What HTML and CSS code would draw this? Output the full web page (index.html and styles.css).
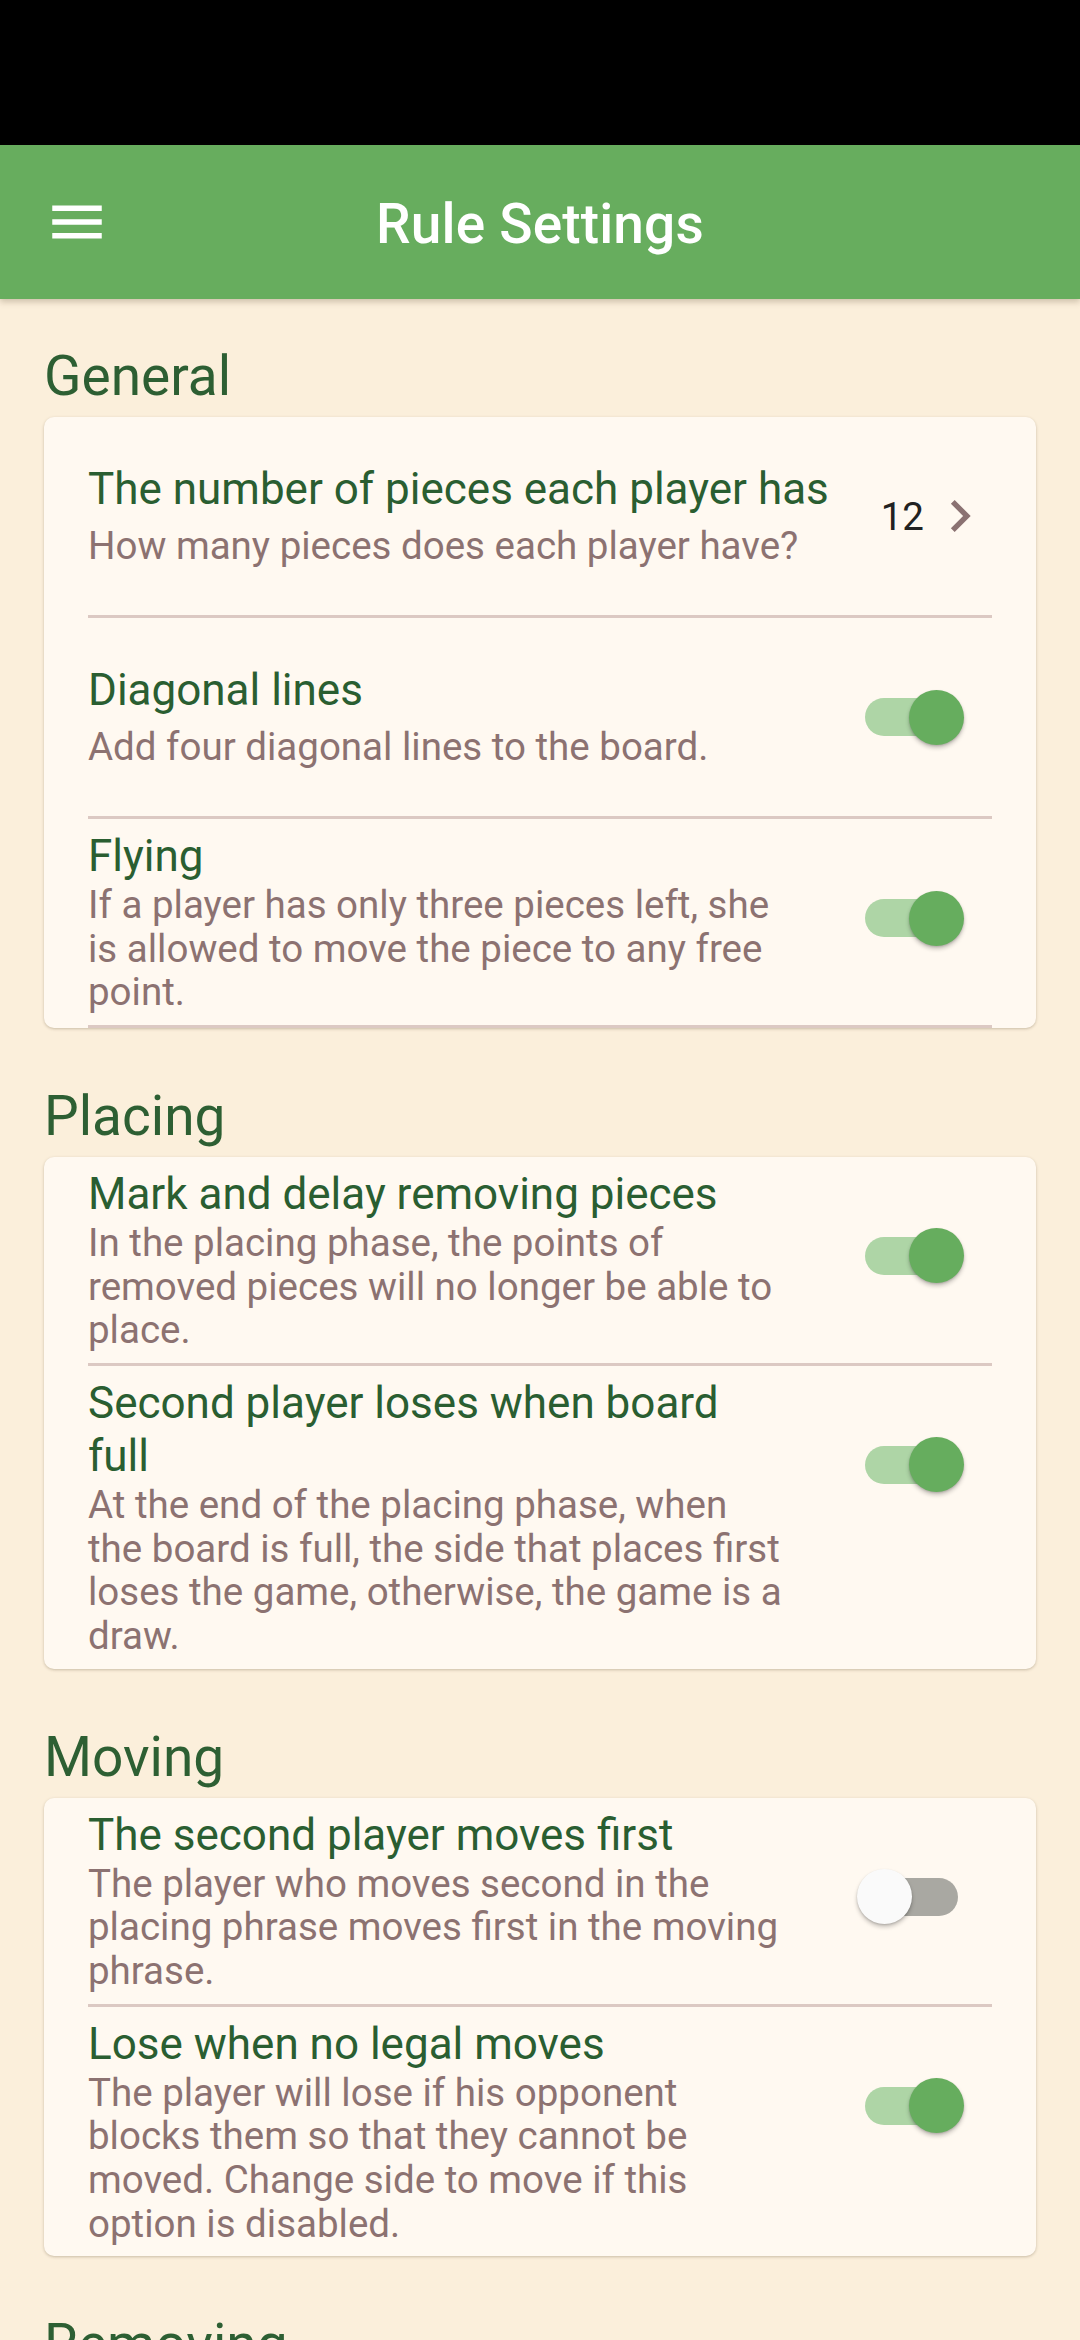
FILE: index.html
```html
<!DOCTYPE html>
<html lang="en">
<head>
<meta charset="utf-8">
<title>Rule Settings</title>
<link rel="stylesheet" href="styles.css">
</head>
<body>
<div class="status-bar"></div>
<header class="app-bar">
  <svg class="menu-icon" viewBox="0 0 24 24" width="66" height="66"><path fill="#fff" d="M3 18h18v-2H3v2zm0-5h18v-2H3v2zm0-7v2h18V6H3z"/></svg>
  <h1 class="app-title">Rule Settings</h1>
  <span></span>
</header>

<main class="content">
  <section class="section">
    <h2 class="section-title">General</h2>
    <div class="card">
      <div class="row row-two">
        <div class="row-text">
          <div class="row-title">The number of pieces each player has</div>
          <div class="row-sub">How many pieces does each player have?</div>
        </div>
        <div class="value">
          <span class="value-num">12</span>
          <svg class="chevron" viewBox="0 0 24 24" width="64" height="64"><path fill="#8b7272" d="M10 6L8.59 7.41 13.17 12l-4.58 4.59L10 18l6-6z"/></svg>
        </div>
      </div>
      <div class="divider"></div>
      <div class="row row-two">
        <div class="row-text">
          <div class="row-title">Diagonal lines</div>
          <div class="row-sub">Add four diagonal lines to the board.</div>
        </div>
        <div class="switch on"><span class="track"></span><span class="thumb"></span></div>
      </div>
      <div class="divider"></div>
      <div class="row">
        <div class="row-text">
          <div class="row-title">Flying</div>
          <div class="row-sub">If a player has only three pieces left, she is allowed to move the piece to any free point.</div>
        </div>
        <div class="switch on"><span class="track"></span><span class="thumb"></span></div>
      </div>
      <div class="divider"></div>
    </div>
  </section>

  <section class="section">
    <h2 class="section-title">Placing</h2>
    <div class="card">
      <div class="row">
        <div class="row-text">
          <div class="row-title">Mark and delay removing pieces</div>
          <div class="row-sub">In the placing phase, the points of removed pieces will no longer be able to place.</div>
        </div>
        <div class="switch on"><span class="track"></span><span class="thumb"></span></div>
      </div>
      <div class="divider"></div>
      <div class="row">
        <div class="row-text">
          <div class="row-title">Second player loses when board full</div>
          <div class="row-sub">At the end of the placing phase, when the board is full, the side that places first loses the game, otherwise, the game is a draw.</div>
        </div>
        <div class="switch on"><span class="track"></span><span class="thumb"></span></div>
      </div>
    </div>
  </section>

  <section class="section">
    <h2 class="section-title">Moving</h2>
    <div class="card">
      <div class="row">
        <div class="row-text">
          <div class="row-title">The second player moves first</div>
          <div class="row-sub">The player who moves second in the placing phrase moves first in the moving phrase.</div>
        </div>
        <div class="switch off"><span class="track"></span><span class="thumb"></span></div>
      </div>
      <div class="divider"></div>
      <div class="row">
        <div class="row-text">
          <div class="row-title">Lose when no legal moves</div>
          <div class="row-sub">The player will lose if his opponent blocks them so that they cannot be moved. Change side to move if this option is disabled.</div>
        </div>
        <div class="switch on"><span class="track"></span><span class="thumb"></span></div>
      </div>
    </div>
  </section>

  <section class="section">
    <h2 class="section-title">Removing</h2>
  </section>
</main>
</body>
</html>
```

FILE: styles.css
```css
* { box-sizing: border-box; }

html, body {
  margin: 0;
  padding: 0;
}

body {
  background: #fbefdb;
  font-family: Roboto, "Noto Sans", "Liberation Sans", sans-serif;
  width: 1080px;
  overflow: hidden;
}

.status-bar {
  height: 145px;
  background: #000;
}

.app-bar {
  height: 154px;
  background: #67ad5e;
  display: grid;
  grid-template-columns: 1fr auto 1fr;
  align-items: center;
  padding-top: 4px;
  box-shadow: 0 3px 6px rgba(80, 60, 30, 0.25);
  position: relative;
  z-index: 2;
}

.menu-icon {
  margin-left: 44px;
  margin-top: -4px;
  display: block;
}

.app-title {
  margin: 0;
  color: #fff;
  font-size: 55px;
  font-weight: 500;
  line-height: 64px;
  letter-spacing: 0.15px;
}

.content {
  display: flex;
  flex-direction: column;
}

.section {
  padding-top: 45px;
}

.section-title {
  margin: 0 0 9px 0;
  padding-left: 44px;
  font-size: 55px;
  font-weight: 400;
  line-height: 64px;
  color: #2d5f33;
}

.card {
  margin: 0 44px 11px;
  background: #fff9f1;
  border-radius: 10px;
  box-shadow: 0 1px 3px rgba(90, 70, 40, 0.3);
  overflow: hidden;
}

.row {
  display: flex;
  align-items: flex-start;
  padding: 11px 44px;
  min-height: 198px;
}

.row-text {
  flex: 1;
  min-width: 0;
}

.row-two .row-text {
  padding-top: 35px;
}

.row-title {
  font-size: 44px;
  line-height: 53px;
  color: #2a5e31;
}

.row-sub {
  font-size: 38.5px;
  line-height: 43.65px;
  color: #8c7271;
}

.row-two .row-sub {
  margin-top: 8px;
}

.divider {
  height: 3px;
  margin: 0 44px;
  background: #dcc9c3;
}

.value {
  flex: none;
  display: flex;
  align-items: center;
  height: 110px;
  margin-top: 33px;
  margin-left: 44px;
  gap: 4px;
}

.value-num {
  font-size: 38.5px;
  color: #222;
}

.chevron {
  display: block;
}

.switch {
  flex: none;
  position: relative;
  width: 162px;
  height: 110px;
  margin-left: 44px;
  margin-top: 33px;
}

.track {
  position: absolute;
  left: 35px;
  top: 36px;
  width: 93px;
  height: 38px;
  border-radius: 19px;
  background: #aed5a6;
}

.thumb {
  position: absolute;
  top: 27.5px;
  width: 55px;
  height: 55px;
  border-radius: 50%;
  box-shadow: 0 3px 4px rgba(0, 0, 0, 0.22), 0 1px 2px rgba(0, 0, 0, 0.14);
}

.switch.on .thumb {
  left: 79px;
  background: #66ad5e;
}

.switch.off .track {
  background: #a9a8a2;
}

.switch.off .thumb {
  left: 27px;
  background: #fafafa;
}
```
